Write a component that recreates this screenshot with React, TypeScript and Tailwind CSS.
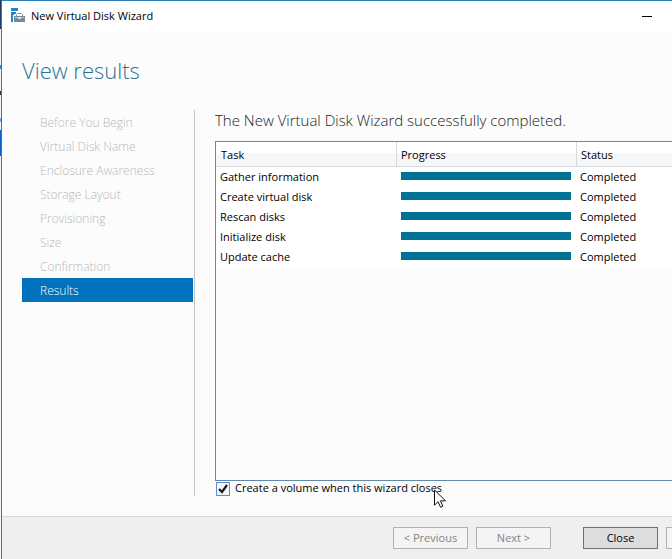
import React from 'react';

interface Task {
  name: string;
  progress: number;
  status: string;
}

const steps = [
  'Before You Begin',
  'Virtual Disk Name',
  'Enclosure Awareness',
  'Storage Layout',
  'Provisioning',
  'Size',
  'Confirmation',
  'Results',
];

const tasks: Task[] = [
  { name: 'Gather information', progress: 100, status: 'Completed' },
  { name: 'Create virtual disk', progress: 100, status: 'Completed' },
  { name: 'Rescan disks', progress: 100, status: 'Completed' },
  { name: 'Initialize disk', progress: 100, status: 'Completed' },
  { name: 'Update cache', progress: 100, status: 'Completed' },
];

const ServerIcon = () => (
  <svg width="16" height="16" viewBox="0 0 16 16" aria-hidden="true">
    <path d="M1 0h7v3H1zM1 4h5v2H4v1H3v7H1z" fill="#2384cc" />
    <path d="M6.5 8V6.5l1-1h4l1 1V8" fill="none" stroke="#8196a5" strokeWidth="1" />
    <path d="M4 8h11v6H4z" fill="#71899a" />
    <path d="M5 9h9v1H5z" fill="#b9c6cf" />
    <path d="M8 9h3v2H8z" fill="#dde4e9" />
  </svg>
);

const Cursor = () => (
  <svg width="12" height="19" viewBox="0 0 12 19" aria-hidden="true">
    <path
      d="M.5 1v15.2l3.6-3.5 2.4 5.5 2.3-1-2.3-5.4h5z"
      fill="#fff"
      stroke="#111"
      strokeWidth="1"
    />
  </svg>
);

// Strip of the desktop that shows beside the window
const DesktopEdge = () => (
  <div className="flex w-px shrink-0 flex-col bg-[#f4f4f4]">
    <span className="h-[29px] bg-[#1c3a63]" />
    <span className="mt-[36px] h-1 bg-[#3a86c8]" />
    <span className="mt-[22px] h-1 bg-[#333333]" />
    <span className="mt-[23px] h-1 bg-[#6ea6de]" />
    <span className="mt-2 h-[26px] bg-[#0b62c4]" />
  </div>
);

const TaskTable: React.FC<{ rows: Task[] }> = ({ rows }) => (
  <table className="w-full table-fixed border-separate border-spacing-0 text-left text-[11px] text-black">
    <thead>
      <tr className="h-[25px] bg-linear-to-b from-white from-40% to-[#f5f6f8] to-50%">
        <th className="w-[181px] border-r border-b border-[#d6d9dc] pt-0.5 pl-[5px] font-normal">Task</th>
        <th className="w-[180px] border-r border-b border-[#d6d9dc] pt-0.5 pl-1 font-normal">Progress</th>
        <th className="border-b border-[#d6d9dc] pt-0.5 pl-1 font-normal">Status</th>
      </tr>
    </thead>
    <tbody>
      {rows.map((row) => (
        <tr key={row.name} className="h-5 bg-white">
          <td className="p-0 pl-1">{row.name}</td>
          <td className="p-0 pr-[6px] pb-0.5 pl-1">
            <div className="h-2 bg-[#007394]" style={{ width: `${row.progress}%` }} />
          </td>
          <td className="p-0 pl-[3px]">{row.status}</td>
        </tr>
      ))}
    </tbody>
  </table>
);

const App: React.FC = () => {
  return (
    <div className="flex min-h-screen overflow-hidden font-['Open_Sans','Noto_Sans',sans-serif]">
      <DesktopEdge />
      <div className="flex min-w-0 flex-1 flex-col border-l border-t border-t-[#2f7fb8] border-l-[#2b82a8] bg-[#fcfcfc]">
        <header className="flex h-[30px] items-center bg-white pl-2 pr-5">
          <ServerIcon />
          <span className="ml-[5px] text-[11px] text-black">New Virtual Disk Wizard</span>
          <button aria-label="Minimize" className="ml-auto flex h-5 items-center">
            <span className="h-px w-[10px] bg-black" />
          </button>
        </header>

        <h1 className="mt-[23px] pl-5 text-[22px] leading-8 font-light text-[#2f7391]">View results</h1>

        <div className="mt-6 flex flex-1 pl-5">
          <nav className="mb-5 w-[173px] shrink-0 border-r border-[#c4c4c4] pr-px">
            <ol>
              {steps.map((step) => (
                <li
                  key={step}
                  className={
                    step === 'Results'
                      ? 'h-6 bg-[#0072bc] pl-[18px] text-xs leading-[26px] font-light text-white'
                      : 'h-6 pl-[18px] text-xs leading-[26px] font-light text-[#b8b8b8]'
                  }
                >
                  {step}
                </li>
              ))}
            </ol>
          </nav>

          <main className="ml-5 flex min-w-0 flex-1 flex-col">
            <p className="h-[31px] text-[15px] leading-5 font-light text-[#222222]">
              The New Virtual Disk Wizard successfully completed.
            </p>
            <div className="flex-1 border border-r-0 border-[#6389a8]">
              <TaskTable rows={tasks} />
            </div>
            <div className="relative mb-5 flex h-[15px] items-center self-start pl-px">
              <input
                id="create-volume"
                type="checkbox"
                defaultChecked
                className="peer h-[14px] w-[14px] appearance-none border border-[#5b8fd0] bg-[#f3f8fd]"
              />
              <svg
                className="pointer-events-none absolute left-px hidden peer-checked:block"
                width="14"
                height="14"
                viewBox="0 0 14 14"
                aria-hidden="true"
              >
                <path d="M3 7l3 3L11 3" fill="none" stroke="#1a1a1a" strokeWidth="2.2" />
              </svg>
              <label htmlFor="create-volume" className="ml-[5px] text-[11px] text-black">
                Create a volume when this wizard closes
              </label>
              <div className="pointer-events-none absolute top-2 -right-1">
                <Cursor />
              </div>
            </div>
          </main>
        </div>

        <footer className="flex h-[43px] shrink-0 items-start justify-end border-t border-[#d9d9d9] bg-[#efefef] pt-[10px] text-[11px]">
          <button disabled className="h-[22px] w-[75px] border border-[#adb2b5] bg-[#f4f4f4] text-[#838383]">
            &lt; Previous
          </button>
          <button disabled className="ml-2 h-[22px] w-[75px] border border-[#adb2b5] bg-[#f4f4f4] text-[#838383]">
            Next &gt;
          </button>
          <button className="ml-8 h-[22px] w-[75px] border border-[#707070] bg-[#dddddd] text-black">
            Close
          </button>
          <button
            disabled
            aria-label="Cancel"
            className="ml-2 h-[22px] w-[6px] border border-r-0 border-[#adb2b5] bg-[#f4f4f4]"
          />
        </footer>
      </div>
    </div>
  );
};

export default App;
